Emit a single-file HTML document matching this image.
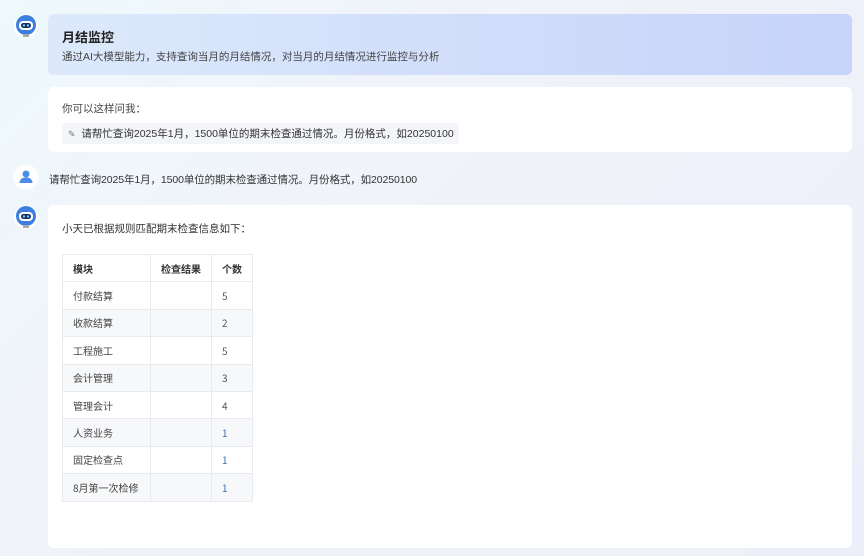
<!DOCTYPE html>
<html><head><meta charset="utf-8"><style>
*{margin:0;padding:0;box-sizing:border-box}
body{width:864px;height:556px;overflow:hidden;font-family:"Liberation Sans","Noto Sans CJK SC",sans-serif;background:linear-gradient(135deg,#eef9fc 0%,#f1f3fa 40%,#eceef9 100%);position:relative;color:#333}
.av{position:absolute;left:13px;width:26px;height:26px}
.card{position:absolute;left:48px;width:804px;border-radius:6px}
.h{top:14px;height:61px;background:linear-gradient(90deg,#dde9fb,#c6d3fa);padding:13px 14px}
.h b{font-size:13px;color:#222;display:block;margin-bottom:3px}
.h p{font-size:10.5px;color:#444}
.c2{top:87px;height:65px;background:#fff;padding:14px 14px}
.c2 .t{font-size:10.5px;color:#444}
.c2 .q{display:inline-block;margin-top:7px;background:#f3f5f9;font-size:10.5px;padding:3px 5px 3px 6px;color:#333;border-radius:3px}
.u{position:absolute;left:49px;top:172px;font-size:10.5px;color:#333;letter-spacing:-0.1px}
.c3{top:205px;height:343px;background:#fff;padding:16px 14px}
.c3 .t{font-size:10.5px;color:#333}
table{position:absolute;left:14px;top:49px;border-collapse:collapse;font-size:10px;font-family:"Noto Sans CJK SC",sans-serif}
td{border:1px solid #e8eaee;height:27.4px;padding:0 10px;color:#444;vertical-align:middle;line-height:15px}
tr:nth-child(odd) td{background:#f7f8fa}
tr:first-child td{background:#fff;font-weight:bold;color:#333}
td.n{color:#555}
</style></head><body>
<svg class="av" style="top:13px" viewBox="0 0 26 26"><circle cx="13" cy="13" r="12" fill="#fff"/><circle cx="13" cy="12" r="10" fill="#3d7fe0"/><rect x="6" y="8" width="14" height="9" rx="4" fill="#fff"/><rect x="8" y="10" width="10" height="5" rx="2.5" fill="#1a2a5a"/><circle cx="11" cy="12.5" r="1.2" fill="#6cf"/><circle cx="15" cy="12.5" r="1.2" fill="#6cf"/><rect x="10" y="21" width="6" height="3" fill="#aaa"/></svg>
<div class="card h"><b>月结监控</b><p>通过AI大模型能力，支持查询当月的月结情况，对当月的月结情况进行监控与分析</p></div>
<div class="card c2"><div class="t">你可以这样问我：</div><div class="q"><span style="color:#777;font-size:9px">✎</span>&nbsp; 请帮忙查询2025年1月，1500单位的期末检查通过情况。月份格式，如20250100</div></div>
<svg class="av" style="top:164px" viewBox="0 0 26 26"><circle cx="13" cy="13" r="12.5" fill="#fff"/><circle cx="13" cy="10" r="3.5" fill="#4a8de8"/><path d="M6.5 19c0-4 3-5.5 6.5-5.5s6.5 1.5 6.5 5.5z" fill="#4a8de8"/></svg>
<div class="u">请帮忙查询2025年1月，1500单位的期末检查通过情况。月份格式，如20250100</div>
<svg class="av" style="top:204px" viewBox="0 0 26 26"><circle cx="13" cy="13" r="12" fill="#fff"/><circle cx="13" cy="12" r="10" fill="#3d7fe0"/><rect x="6" y="8" width="14" height="9" rx="4" fill="#fff"/><rect x="8" y="10" width="10" height="5" rx="2.5" fill="#1a2a5a"/><circle cx="11" cy="12.5" r="1.2" fill="#6cf"/><circle cx="15" cy="12.5" r="1.2" fill="#6cf"/><rect x="10" y="21" width="6" height="3" fill="#aaa"/></svg>
<div class="card c3"><div class="t">小天已根据规则匹配期末检查信息如下：</div>
<table>
<tr><td style="width:88px">模块</td><td style="width:61px">检查结果</td><td style="width:41px">个数</td></tr>
<tr><td>付款结算</td><td></td><td class="n">5</td></tr>
<tr><td>收款结算</td><td></td><td class="n">2</td></tr>
<tr><td>工程施工</td><td></td><td class="n">5</td></tr>
<tr><td>会计管理</td><td></td><td class="n">3</td></tr>
<tr><td>管理会计</td><td></td><td class="n">4</td></tr>
<tr><td>人资业务</td><td></td><td class="n" style="color:#3a6ea8">1</td></tr>
<tr><td>固定检查点</td><td></td><td class="n" style="color:#3a6ea8">1</td></tr>
<tr><td>8月第一次检修</td><td></td><td class="n" style="color:#3a6ea8">1</td></tr>
</table></div>
</body></html>
